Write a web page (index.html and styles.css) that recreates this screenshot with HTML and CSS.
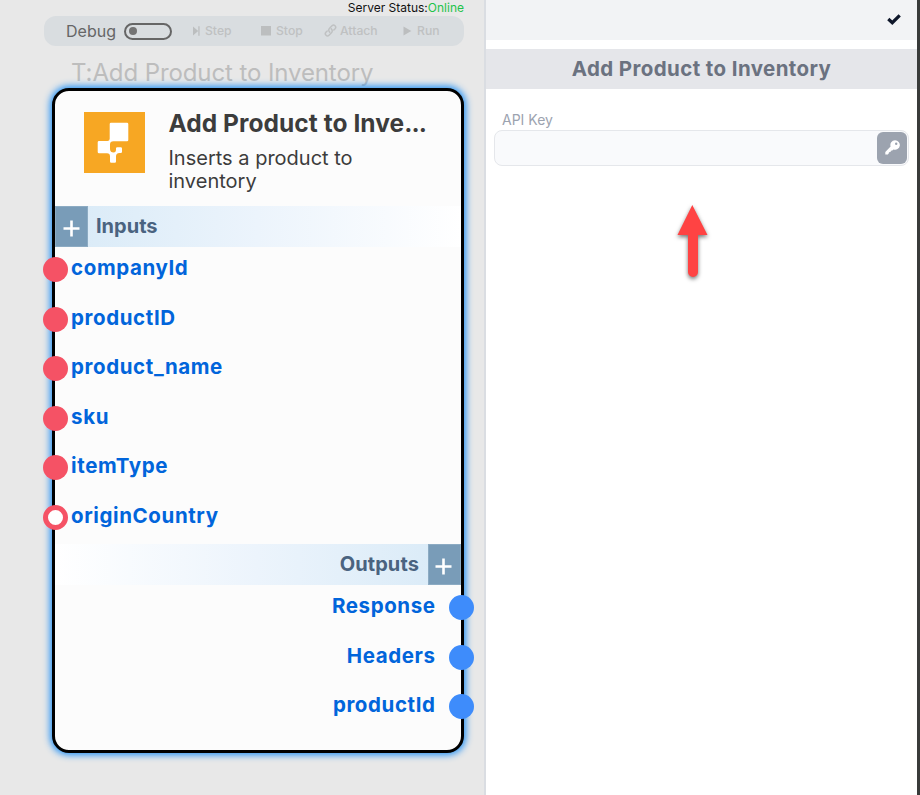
FILE: index.html
```html
<!DOCTYPE html>
<html lang="en">
<head>
<meta charset="utf-8">
<title>Add Product to Inventory</title>
<link rel="stylesheet" href="styles.css">
</head>
<body>
<main class="app">
  <section class="canvas">
    <div class="status">Server Status:<span class="online">Online</span></div>
    <div class="toolbar">
      <span class="debug">Debug</span>
      <span class="toggle"><i></i></span>
      <span class="tool step"><svg width="8" height="10" viewBox="0 0 8 10"><path d="M0 .5 5.2 5 0 9.5zM5.300.3H6.600v9.4H5.300z"/></svg>Step</span>
      <span class="tool stop"><svg width="10" height="10" viewBox="0 0 10 10"><path d="M0 0h10v9.500H0z"/></svg>Stop</span>
      <span class="tool attach"><svg width="13" height="13" viewBox="0 0 13 13"><g fill="none" stroke="#bfc1c2" stroke-width="1.5" stroke-linecap="round"><path d="M5.700 8.100C4.300 6.700 4.600 5.200 5.600 4.200L8 1.800c2-2 4.900.8 3.100 2.900L9.800 6"/><path d="M7.300 4.900c1.400 1.400 1.100 2.900.1 3.900L5 11.200c-2 2-4.900-.8-3.100-2.900L3.200 7"/></g></svg>Attach</span>
      <span class="tool run"><svg width="9" height="10" viewBox="0 0 9 10"><path d="M.5.500 8.300 5 .5 9.500z"/></svg>Run</span>
    </div>
    <div class="node-title">T:Add Product to Inventory</div>
    <article class="card">
      <header class="card-head">
        <svg class="logo" width="61" height="61" viewBox="0 0 61 61"><path fill="#f7a723" d="M0 0h61v61H0z"/><path fill="#fff" d="M27 10.700h16q1.300 0 1.300 1.300v16q0 1.300-1.300 1.300H29.500Q26 29.300 26 32.500V37c0 2.500 1.500 3.500 3.500 3.500 1.800 0 2.500-1 2.500-3v-1q0-1.200 1.200-1.200h3.600q1.200 0 1.200 1.200v3.300q0 1.200-1.200 1.200H35.500C33 41 32 42.500 32 44.500v5q0 1.200-1.200 1.200h-3.600q-1.200 0-1.200-1.200v-5c0-2-1-3.200-3-3.200h-8q-1.300 0-1.300-1.300V30.300q0-1.300 1.300-1.300h8.500q2.200 0 2.200-2.200V12q0-1.300 1.300-1.300z"/></svg>
        <div class="card-text">
          <h1>Add Product to Inve<span class="dots">...</span></h1>
          <p>Inserts a product to inventory</p>
        </div>
      </header>
      <div class="bar inputs"><span class="plus"><svg width="17" height="17" viewBox="0 0 17 17"><path d="M8.500.5v16M.5 8.500h16"/></svg></span><span class="bar-name">Inputs</span></div>
      <ul class="ports in">
        <li><i></i><span>companyId</span></li>
        <li><i></i><span>productID</span></li>
        <li><i></i><span>product_name</span></li>
        <li><i></i><span>sku</span></li>
        <li><i></i><span>itemType</span></li>
        <li class="optional"><i></i><span>originCountry</span></li>
      </ul>
      <div class="bar outputs"><span class="bar-name">Outputs</span><span class="plus"><svg width="17" height="17" viewBox="0 0 17 17"><path d="M8.500.5v16M.5 8.500h16"/></svg></span></div>
      <ul class="ports out">
        <li><span>Response</span><i></i></li>
        <li><span>Headers</span><i></i></li>
        <li><span>productId</span><i></i></li>
      </ul>
    </article>
  </section>
  <aside class="panel">
    <div class="panel-top"><svg width="14" height="11" viewBox="0 0 14 11"><path d="m1.300 5 4 3.700L12.700 1.300" fill="none" stroke="#0f172a" stroke-width="3.200"/></svg></div>
    <h2>Add Product to Inventory</h2>
    <label>API Key</label>
    <div class="field"><span class="key"><svg width="15" height="15" viewBox="0 0 15 15"><path fill="#fff" fill-rule="evenodd" d="M10 .3a4.700 4.700 0 1 1-1.500 9.100L7.300 10.600 5.800 10.800 5.600 12 4 12.200 3.700 13.500 2.800 14.500H.3V12L5.600 6.500A4.700 4.700 0 0 1 10 .3zm1.200 2.300a1.200 1.200 0 1 0 0 2.400 1.200 1.200 0 0 0 0-2.400z"/></svg></span></div>
    <svg class="arrow" width="50" height="90" viewBox="0 0 50 90"><path fill="#ff4343" d="M24.300 10 39.500 40H30v37a5 5 0 0 1-10 0V40H9.500z"/></svg>
  </aside>
</main>
</body>
</html>
```
FILE: styles.css
```css
* { box-sizing: border-box; }
body { margin: 0; font-family: Inter, "Liberation Sans", sans-serif; }
h1, h2, p, ul { margin: 0; padding: 0; }
svg { display: block; flex: none; }
.app { display: flex; width: 920px; height: 795px; overflow: hidden; }
.canvas { width: 486px; flex: none; background: #e8e8e8; border-right: 2px solid #dadde2; }
.status { height: 16px; line-height: 16px; padding-right: 20px; text-align: right; font-size: 12px; color: #111; }
.online { color: #1fc34a; }
.toolbar { display: flex; align-items: center; width: 420px; height: 30px; margin-left: 44px; padding-left: 22px; border-radius: 12px; background: #d9dde0; }
.debug { width: 58px; padding-bottom: 1px; font-size: 16px; color: #666; }
.toggle { display: flex; align-items: center; width: 48px; height: 17px; padding-left: 3px; border: 2px solid #666; border-radius: 9px; }
.toggle i { width: 8px; height: 8px; border-radius: 50%; background: #747474; }
.tool { display: flex; align-items: center; gap: 5px; height: 30px; padding-bottom: 1px; font-size: 12.2px; font-weight: 500; color: #bfc1c2; fill: #bcbebf; white-space: nowrap; }
.step { margin-left: 21px; width: 68px; gap: 4px; }
.stop { width: 63px; }
.attach { width: 80px; gap: 3px; }
.run { margin-left: -1px; }
.node-title { height: 42px; padding: 13px 0 0 71px; font-size: 24px; line-height: 28px; letter-spacing: -.1px; color: #bdbdbd; white-space: nowrap; }
.card { position: relative; width: 412px; height: 665px; margin-left: 52px; border: 3px solid #000; border-radius: 17px; background: #fcfcfc; box-shadow: 0 0 7px 2px #2391f5; }
.card-head { display: flex; height: 115px; padding: 21px 0 0 29px; gap: 23.5px; }
.card-text { width: 275px; color: #3c3c3c; }
h1 { white-space: nowrap; font-size: 24.5px; line-height: 30px; font-weight: 700; margin-top: -4px; letter-spacing: .05px; }
.dots { letter-spacing: -.9px; }
.card-text p { width: 220px; margin-top: 9px; font-size: 20px; line-height: 23px; }
.bar { display: flex; align-items: center; height: 41px; gap: 8px; font-size: 20px; font-weight: 700; color: #4a6380; }
.bar-name { padding-bottom: 2px; }
.inputs { background: linear-gradient(90deg, #d8eaf7, #ecf4fc 50%, #fff); }
.outputs { justify-content: flex-end; gap: 9px; letter-spacing: .1px; background: linear-gradient(270deg, #d8eaf7, #ecf4fc 50%, #fff); }
.plus { display: flex; align-items: center; justify-content: center; width: 33px; height: 41px; padding-top: 4px; background: #799cb8; border: 1px solid #8cabc3; }
.outputs .plus { padding-right: 2px; }
.plus svg { fill: none; stroke: #fff; stroke-width: 2.6; }
.ports { list-style: none; font-size: 20.5px; letter-spacing: .6px; font-weight: 700; color: #0165db; }
.ports li { display: flex; align-items: flex-start; height: 49.5px; line-height: 24px; padding-top: 9px; }
.ports i { flex: none; width: 25px; height: 25px; margin-top: 1px; border-radius: 50%; background: #f55265; }
.in li { margin-left: -11.600px; gap: 2.700px; }
.in .optional i { border: 5px solid #f55265; background: #fff; }
.out li { justify-content: flex-end; margin-right: -13px; gap: 13.400px; }
.out i { background: #3e8cfb; }
.panel { width: 434px; border-right: 3px solid #393b3a; background: #fff; }
.panel-top { display: flex; justify-content: flex-end; height: 40px; padding: 14px 16px 0 0; background: #f2f3f5; }
h2 { height: 40px; margin-top: 9px; background: #e5e6ea; color: #6b7280; text-align: center; font-size: 20.5px; letter-spacing: .4px; line-height: 40px; font-weight: 700; }
label { display: block; height: 41px; padding: 22px 0 0 16px; font-size: 14px; line-height: 18px; color: #9ca3af; }
.field { display: flex; align-items: center; justify-content: flex-end; width: 415px; height: 36px; margin-left: 8px; padding-right: 1px; border: 1px solid #e5e7eb; border-radius: 8px; background: #f9fafc; }
.key { display: flex; align-items: center; justify-content: center; width: 30px; height: 32px; padding-bottom: 2px; border-radius: 6px; background: #9ca3af; }
.arrow { margin: 29px 0 0 182px; filter: drop-shadow(0 2px 2px rgba(0,0,0,.55)); }
```
